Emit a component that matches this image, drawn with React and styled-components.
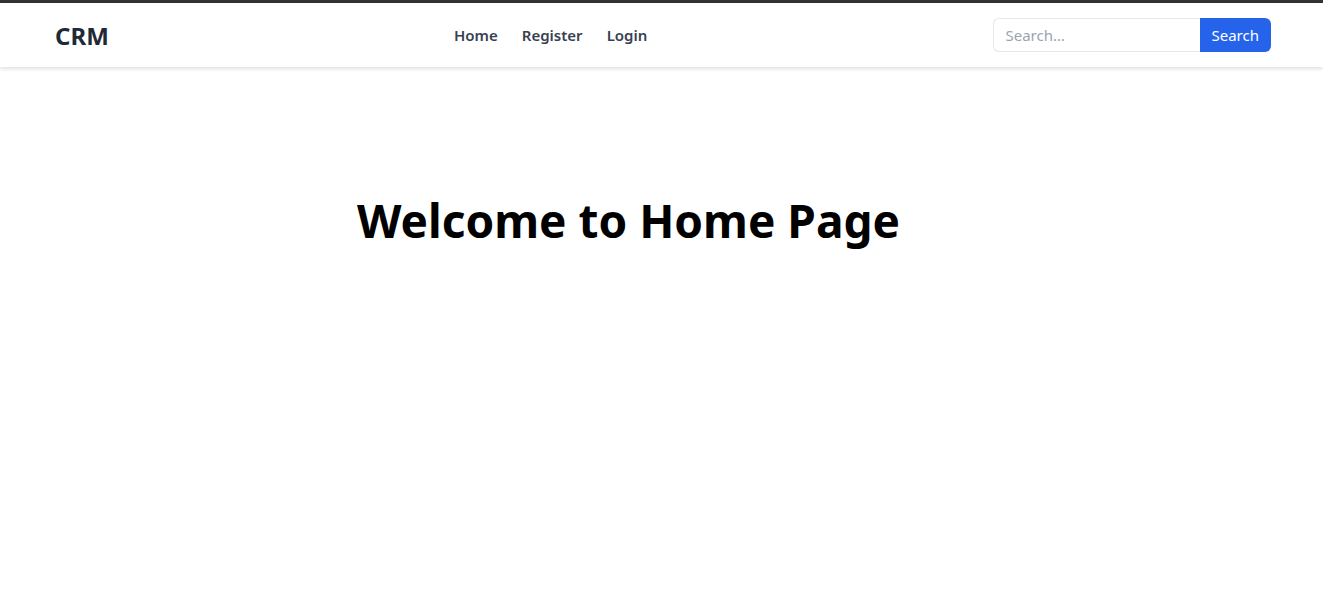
import React from 'react';
import styled, { createGlobalStyle } from 'styled-components';

const GlobalStyle = createGlobalStyle`
  html, body {
    margin: 0;
    padding: 0;
    background: #ffffff;
    font-family: "Noto Sans", "Open Sans", Arial, sans-serif;
  }
  * {
    box-sizing: border-box;
  }
`;

const Page = styled.div`
  min-height: 595px;
  border-top: 3px solid #333333;
`;

const Navbar = styled.nav`
  height: 64px;
  display: flex;
  align-items: center;
  justify-content: space-between;
  padding: 0 52px 0 55px;
  background: #ffffff;
  box-shadow: 0 2px 4px rgba(0, 0, 0, 0.12);
`;

const Brand = styled.div`
  font-size: 24px;
  font-weight: 700;
  color: #1f2937;
`;

const Links = styled.ul`
  display: flex;
  gap: 24px;
  list-style: none;
  margin: 0;
  padding: 0;
`;

const NavLink = styled.a`
  font-size: 15px;
  font-weight: 600;
  color: #374151;
  text-decoration: none;
  cursor: pointer;
`;

const SearchForm = styled.form`
  display: flex;
  height: 34px;
`;

const SearchInput = styled.input`
  width: 207px;
  height: 100%;
  padding: 0 12px;
  border: 1px solid #e5e7eb;
  border-right: none;
  border-radius: 6px 0 0 6px;
  font-family: inherit;
  font-size: 15px;
  color: #374151;
  outline: none;

  &::placeholder {
    color: #9ca3af;
  }
`;

const SearchButton = styled.button`
  height: 100%;
  padding: 0 12px;
  border: none;
  border-radius: 0 6px 6px 0;
  background: #2563eb;
  color: #ffffff;
  font-family: inherit;
  font-size: 15px;
  cursor: pointer;
`;

const Main = styled.main`
  padding: 122px 66px 0 0;
  text-align: center;
`;

const Title = styled.h1`
  margin: 0;
  font-size: 46px;
  font-weight: 700;
  color: #000000;
`;

export default function App() {
  return (
    <>
      <GlobalStyle />
      <Page>
        <Navbar>
          <Brand>CRM</Brand>
          <Links>
            <li><NavLink>Home</NavLink></li>
            <li><NavLink>Register</NavLink></li>
            <li><NavLink>Login</NavLink></li>
          </Links>
          <SearchForm onSubmit={(e) => e.preventDefault()}>
            <SearchInput type="text" placeholder="Search..." />
            <SearchButton type="submit">Search</SearchButton>
          </SearchForm>
        </Navbar>
        <Main>
          <Title>Welcome to Home Page</Title>
        </Main>
      </Page>
    </>
  );
}
